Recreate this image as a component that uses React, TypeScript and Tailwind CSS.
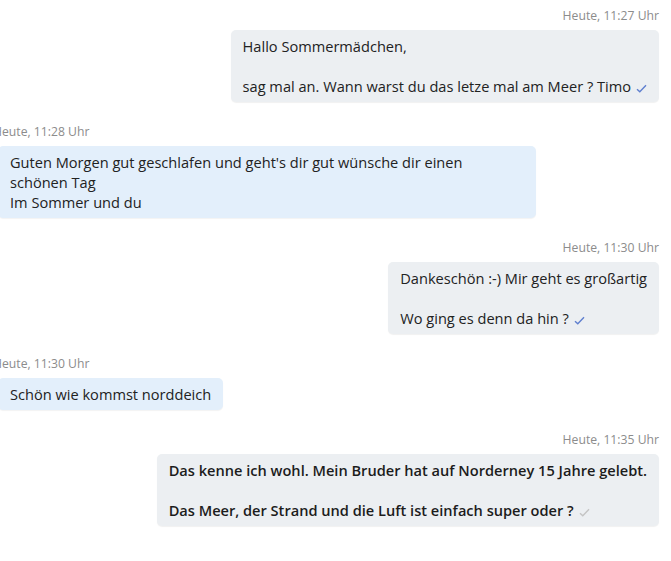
import React from "react";

type Message = {
  id: number;
  time: string;
  lines: string[];
  own: boolean;
  read?: boolean;
  bold?: boolean;
  wrapped?: boolean;
};

const messages: Message[] = [
  {
    id: 1,
    time: "Heute, 11:27 Uhr",
    own: true,
    read: true,
    lines: ["Hallo Sommermädchen,", "", "sag mal an. Wann warst du das letze mal am Meer ? Timo"],
  },
  {
    id: 2,
    time: "Heute, 11:28 Uhr",
    own: false,
    wrapped: true,
    lines: [
      "Guten Morgen gut geschlafen und geht's dir gut wünsche dir einen",
      "schönen Tag",
      "Im Sommer und du",
    ],
  },
  {
    id: 3,
    time: "Heute, 11:30 Uhr",
    own: true,
    read: true,
    lines: ["Dankeschön :-) Mir geht es großartig", "", "Wo ging es denn da hin ?"],
  },
  {
    id: 4,
    time: "Heute, 11:30 Uhr",
    own: false,
    lines: ["Schön wie kommst norddeich"],
  },
  {
    id: 5,
    time: "Heute, 11:35 Uhr",
    own: true,
    read: false,
    bold: true,
    lines: [
      "Das kenne ich wohl. Mein Bruder hat auf Norderney 15 Jahre gelebt.",
      "",
      "Das Meer, der Strand und die Luft ist einfach super oder ?",
    ],
  },
];

function Check({ read }: { read?: boolean }) {
  return (
    <svg
      width="11"
      height="9"
      viewBox="0 0 11 9"
      className={read ? "inline-block ml-[5px] text-[#5f7fcf]" : "inline-block ml-[5px] text-[#c4c4c4]"}
    >
      <path d="M1 5.2 L3.8 7.8 L10 1.2" fill="none" stroke="currentColor" strokeWidth="1.4" />
    </svg>
  );
}

function Bubble({ message }: { message: Message }) {
  const last = message.lines.length - 1;
  let className = "rounded-[5px] bg-[#eceff2] px-3 py-1.5 shadow-[0_1px_1px_rgba(0,0,0,0.06)]";
  if (!message.own) {
    className = message.wrapped
      ? "ml-[5px] w-[538px] rounded-[5px] bg-[#e3effb] px-3 py-1.5 shadow-[0_1px_1px_rgba(0,0,0,0.05)]"
      : "ml-[5px] rounded-[5px] bg-[#e3effb] px-3 py-1.5 shadow-[0_1px_1px_rgba(0,0,0,0.05)]";
  }
  return (
    <div className={className}>
      {message.lines.map((line, i) => (
        <div
          key={i}
          className={
            message.bold
              ? "h-5 whitespace-nowrap font-semibold text-[14.6px] leading-5 text-[#1c1c1c]"
              : "h-5 whitespace-nowrap text-[14.6px] leading-5 text-[#222222]"
          }
        >
          {line}
          {i === last && message.own && <Check read={message.read} />}
        </div>
      ))}
    </div>
  );
}

export default function App() {
  return (
    <div
      className="h-[561px] w-[671px] overflow-hidden bg-white pt-2"
      style={{ fontFamily: '"Open Sans", "Noto Sans", Arial, sans-serif' }}
    >
      <div className="flex flex-col gap-[22px]">
        {messages.map((message) => (
          <div
            key={message.id}
            className={message.own ? "flex flex-col items-end pr-3" : "-ml-[7px] flex flex-col items-start"}
          >
            <div className="mb-[6px] text-[12.2px] leading-4 text-[#8c8c8c]">{message.time}</div>
            <Bubble message={message} />
          </div>
        ))}
      </div>
    </div>
  );
}
